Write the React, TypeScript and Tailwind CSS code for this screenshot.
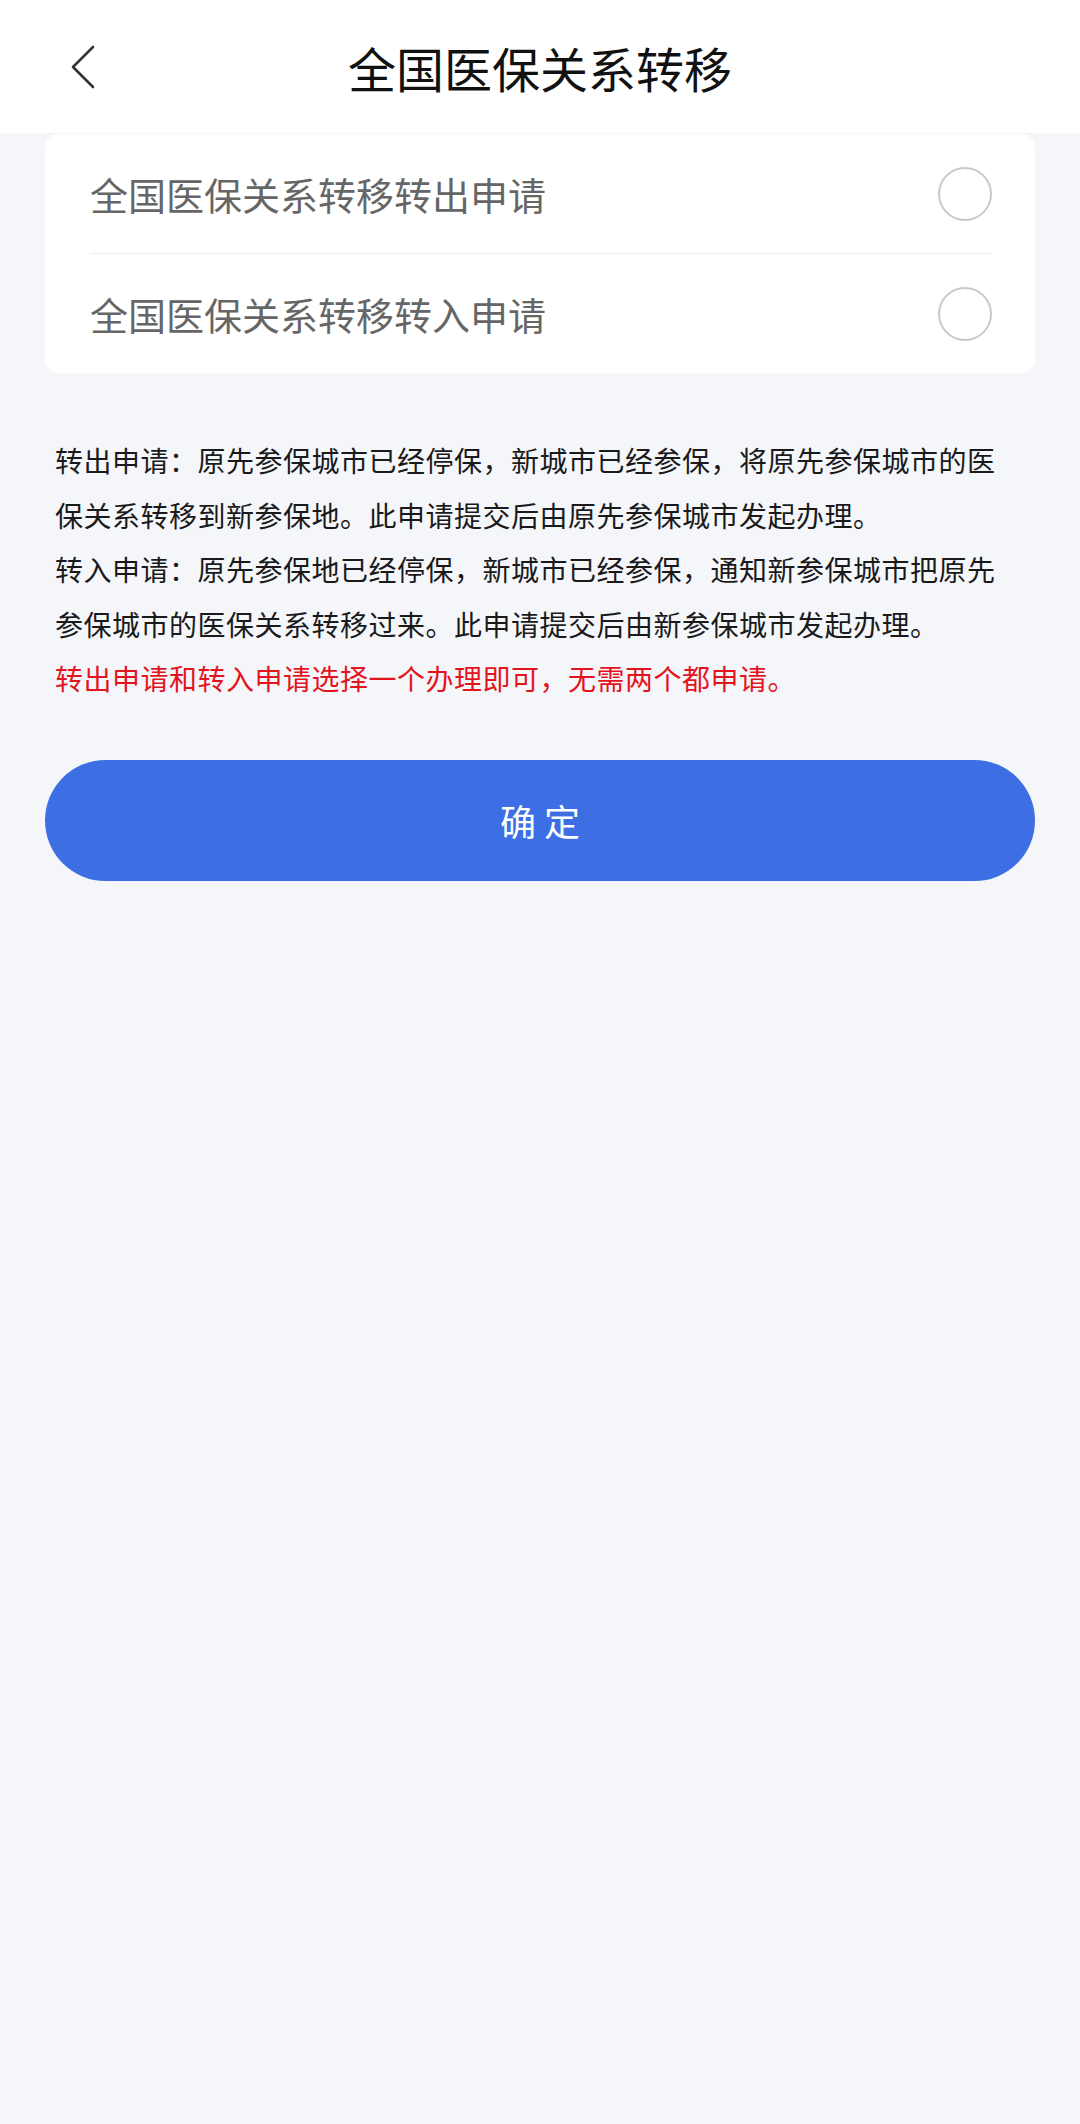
import * as React from 'react';

const FONT = '"Noto Sans CJK SC", "Noto Sans", sans-serif';

interface OptionRowProps {
  label: string;
  checked: boolean;
  onSelect: () => void;
}

function OptionRow({ label, checked, onSelect }: OptionRowProps) {
  return (
    <button
      type="button"
      onClick={onSelect}
      className="flex h-[119px] w-full items-center justify-between pl-[45px] pr-[43px] text-left"
    >
      <span className="text-[38px] leading-none text-[#666666]">{label}</span>
      <span
        className={
          checked
            ? 'flex h-[54px] w-[54px] items-center justify-center rounded-full border-[2.5px] border-[#3d6ee3]'
            : 'flex h-[54px] w-[54px] items-center justify-center rounded-full border-[2.5px] border-[#c9c9c9]'
        }
      >
        {checked && <span className="h-[30px] w-[30px] rounded-full bg-[#3d6ee3]" />}
      </span>
    </button>
  );
}

export default function App() {
  const [selected, setSelected] = React.useState<number | null>(null);

  return (
    <div className="min-h-[2124px] bg-[#f5f6fa]" style={{ fontFamily: FONT }}>
      {/* Top bar */}
      <header className="grid h-[133px] grid-cols-[1fr_auto_1fr] items-center bg-white">
        <div className="flex items-center pl-[70px]">
          <svg width="26" height="44" viewBox="0 0 26 44" fill="none">
            <path d="M23 2 L3 22 L23 42" stroke="#333333" strokeWidth="2.6" strokeLinecap="round" strokeLinejoin="round" />
          </svg>
        </div>
        <h1 className="text-[48px] font-normal leading-none text-[#111111]">全国医保关系转移</h1>
        <div />
      </header>

      <main className="px-[45px]">
        {/* Options */}
        <div className="mt-px rounded-[14px] bg-white">
          <OptionRow label="全国医保关系转移转出申请" checked={selected === 0} onSelect={() => setSelected(0)} />
          <div className="ml-[45px] mr-[43px] h-px bg-[#ebebeb]" />
          <OptionRow label="全国医保关系转移转入申请" checked={selected === 1} onSelect={() => setSelected(1)} />
        </div>

        {/* Notes */}
        <div className="mt-[60px] pl-[10px] pr-[25px] text-[28px] leading-[54.5px] tracking-[0.5px] text-[#1a1a1a]">
          <p>转出申请：原先参保城市已经停保，新城市已经参保，将原先参保城市的医保关系转移到新参保地。此申请提交后由原先参保城市发起办理。</p>
          <p>转入申请：原先参保地已经停保，新城市已经参保，通知新参保城市把原先参保城市的医保关系转移过来。此申请提交后由新参保城市发起办理。</p>
          <p className="text-[#e4141e]">转出申请和转入申请选择一个办理即可，无需两个都申请。</p>
        </div>

        <button
          type="button"
          className="mt-[54px] flex h-[121px] w-full items-center justify-center rounded-full bg-[#3d6ee3] text-[36px] text-white"
        >
          确 定
        </button>
      </main>
    </div>
  );
}
